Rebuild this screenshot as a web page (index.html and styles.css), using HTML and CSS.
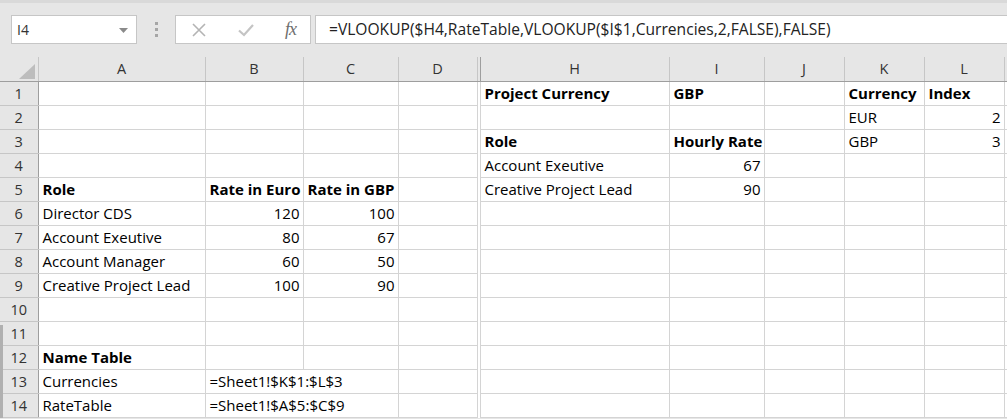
FILE: index.html
```html
<!DOCTYPE html>
<html lang="en">
<head>
  <meta charset="UTF-8" />
  <title>Sheet1</title>
  <link rel="stylesheet" href="styles.css">
</head>
<body>

  <!-- FORMULA BAR -->
  <div class="topbar">
    <div class="formula-row">
      <div class="name-box">
        <span>I4</span>
        <svg class="caret" width="9" height="5" viewBox="0 0 9 5"><path d="M0 0 L9 0 L4.5 5 Z" fill="#8a8a8a"/></svg>
      </div>
      <div class="grip">
        <span></span><span></span><span></span>
      </div>
      <div class="fx-buttons">
        <svg width="16" height="16" viewBox="0 0 16 16"><path d="M2 2 L14 14 M14 2 L2 14" stroke="#b4b4b4" stroke-width="1.6" fill="none"/></svg>
        <svg width="18" height="16" viewBox="0 0 18 16"><path d="M2 8.5 L7 13 L16 3" stroke="#c4c4c4" stroke-width="2.2" fill="none"/></svg>
        <span class="fx">fx</span>
      </div>
      <div class="formula">=VLOOKUP($H4,RateTable,VLOOKUP($I$1,Currencies,2,FALSE),FALSE)</div>
    </div>
  </div>

  <!-- GRID -->
  <div class="sheet">
    <div class="outline"></div>
    <table class="grid">
      <colgroup>
        <col class="w-rh"><col class="w-a"><col class="w-b"><col class="w-c"><col class="w-d">
        <col class="w-hid"><col class="w-h"><col class="w-i"><col class="w-j"><col class="w-k"><col class="w-l"><col class="w-m">
      </colgroup>
      <thead>
        <tr>
          <th class="corner"><svg width="16" height="15" viewBox="0 0 16 15"><path d="M16 0 L16 15 L0 15 Z" fill="#bdbdbd"/></svg></th>
          <th>A</th><th>B</th><th>C</th><th>D</th><th class="hid"></th>
          <th>H</th><th>I</th><th>J</th><th>K</th><th>L</th><th></th>
        </tr>
      </thead>
      <tbody id="sheetBody">
        <!-- rows are built by the script below -->
      </tbody>
    </table>
  </div>

  <script>
    // [row, A, B, C, D, H, I, J, K, L]  -- "*" prefix = bold, numbers align right
    const rows = [
      [1, "", "", "", "", "*Project Currency", "*GBP", "", "*Currency", "*Index"],
      [2, "", "", "", "", "", "", "", "EUR", 2],
      [3, "", "", "", "", "*Role", "*Hourly Rate", "", "GBP", 3],
      [4, "", "", "", "", "Account Exeutive", 67, "", "", ""],
      [5, "*Role", "*Rate in Euro", "*Rate in GBP", "", "Creative Project Lead", 90, "", "", ""],
      [6, "Director CDS", 120, 100, "", "", "", "", "", ""],
      [7, "Account Exeutive", 80, 67, "", "", "", "", "", ""],
      [8, "Account Manager", 60, 50, "", "", "", "", "", ""],
      [9, "Creative Project Lead", 100, 90, "", "", "", "", "", ""],
      [10, "", "", "", "", "", "", "", "", ""],
      [11, "", "", "", "", "", "", "", "", ""],
      [12, "*Name Table", "", "", "", "", "", "", "", ""],
      [13, "Currencies", "=Sheet1!$K$1:$L$3", null, "", "", "", "", "", ""],
      [14, "RateTable", "=Sheet1!$A$5:$C$9", null, "", "", "", "", "", ""]
    ];

    function cell(value, span) {
      const td = document.createElement("td");
      if (span) td.colSpan = span;
      if (typeof value === "number") {
        td.className = "num";
        td.textContent = value;
      } else if (value.startsWith("*")) {
        td.className = "bold";
        td.textContent = value.slice(1);
      } else {
        td.textContent = value;
      }
      return td;
    }

    const tbody = document.getElementById("sheetBody");
    rows.forEach(r => {
      const tr = document.createElement("tr");
      const rh = document.createElement("td");
      rh.className = "rh";
      rh.textContent = r[0];
      tr.appendChild(rh);

      tr.appendChild(cell(r[1]));
      if (r[3] === null) {
        tr.appendChild(cell(r[2], 2));
      } else {
        tr.appendChild(cell(r[2]));
        tr.appendChild(cell(r[3]));
      }
      tr.appendChild(cell(r[4]));

      const hid = document.createElement("td");
      hid.className = "hid";
      tr.appendChild(hid);

      for (let i = 5; i <= 9; i++) tr.appendChild(cell(r[i]));
      tr.appendChild(cell(""));
      tbody.appendChild(tr);
    });
  </script>

</body>
</html>
```

FILE: styles.css
```css
body {
  margin: 0;
  background-color: #e6e6e6;
  font-family: "Open Sans", "Liberation Sans", sans-serif;
  overflow: hidden;
}

/* ---------- formula bar ---------- */

.topbar {
  height: 57px;
  border-top: 3px solid #d9d9d9;
  box-sizing: border-box;
  padding-top: 12px;
}

.formula-row {
  display: flex;
  height: 29px;
}

.name-box {
  margin-left: 11px;
  width: 126px;
  box-sizing: border-box;
  background-color: #ffffff;
  border: 1px solid #c6c6c6;
  display: flex;
  align-items: center;
  justify-content: space-between;
  padding: 0 8px 0 5px;
  font-size: 14px;
  color: #333333;
}

.caret {
  margin-top: 1px;
}

.grip {
  width: 38px;
  display: flex;
  flex-direction: column;
  align-items: center;
  justify-content: center;
  gap: 3px;
}

.grip span {
  width: 3px;
  height: 3px;
  background-color: #a6a6a6;
}

.fx-buttons {
  width: 136px;
  box-sizing: border-box;
  background-color: #ffffff;
  border: 1px solid #c6c6c6;
  display: flex;
  align-items: center;
  justify-content: space-between;
  padding: 0 14px 0 15px;
}

.fx {
  font-family: "Liberation Serif", serif;
  font-style: italic;
  font-size: 18px;
  color: #6e6e6e;
  letter-spacing: -1px;
}

.formula {
  flex: 1;
  margin-left: 4px;
  background-color: #ffffff;
  border: 1px solid #c6c6c6;
  border-right: none;
  padding-left: 13px;
  font-size: 15.6px;
  line-height: 27px;
  color: #222222;
  white-space: nowrap;
}

/* ---------- grid ---------- */

.sheet {
  position: relative;
  background-color: #ffffff;
}

.outline {
  position: absolute;
  left: 0;
  top: 268px;
  width: 3px;
  height: 100px;
  background-color: #b0b0b0;
}

.grid {
  table-layout: fixed;
  border-collapse: collapse;
  width: 1010px;
}

.w-rh { width: 38px; }
.w-a { width: 167px; }
.w-b { width: 98px; }
.w-c { width: 95px; }
.w-d { width: 79px; }
.w-hid { width: 3px; }
.w-h { width: 189px; }
.w-i { width: 95px; }
.w-j { width: 80px; }
.w-k { width: 80px; }
.w-l { width: 80px; }
.w-m { width: 6px; }

.grid th {
  height: 22px;
  padding: 0;
  background-color: #e6e6e6;
  border-left: 1px solid #c6c6c6;
  border-right: 1px solid #c6c6c6;
  border-bottom: 1px solid #9e9e9e;
  font-weight: normal;
  font-size: 14.5px;
  line-height: 16px;
  color: #333333;
  text-align: center;
}

.grid th.corner {
  border-left: none;
  text-align: right;
  vertical-align: bottom;
  padding: 0 3px 2px 0;
  line-height: 0;
}

.grid tr {
  height: 24px;
}

.grid td {
  height: 20px;
  padding: 0 3px 3px 4px;
  border: 1px solid #d4d4d4;
  font-size: 15px;
  color: #000000;
  vertical-align: bottom;
  line-height: 17px;
  white-space: nowrap;
  overflow: hidden;
}

.grid td.num {
  text-align: right;
}

.grid td.bold {
  font-weight: bold;
}

.grid td.rh {
  background-color: #e6e6e6;
  border-left: none;
  border-color: #c6c6c6;
  border-right: 1px solid #9e9e9e;
  text-align: center;
  padding: 0 0 3px 0;
  font-size: 14.5px;
  color: #333333;
}

.grid td.hid {
  padding: 0;
  border-top: none;
  border-bottom: none;
}

.grid th.hid {
  border-left: 1px solid #9e9e9e;
  border-right: 1px solid #9e9e9e;
}
```
